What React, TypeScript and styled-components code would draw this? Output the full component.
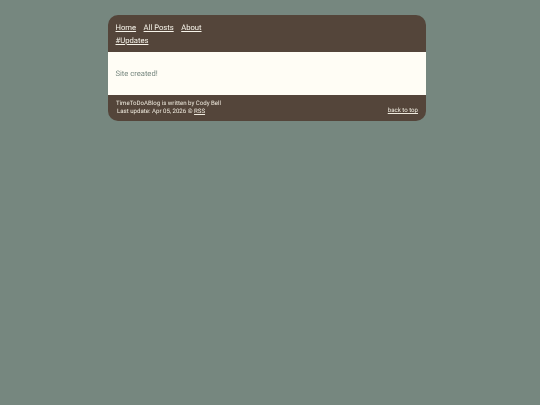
import React from 'react';
import styled, { createGlobalStyle } from 'styled-components';

const GlobalStyle = createGlobalStyle`
	html, body {
		margin: 0;
		padding: 0;
		background: #76877f;
		font-family: Roboto, 'Liberation Sans', sans-serif;
		text-rendering: geometricPrecision;
	}
`;

const Page = styled.div`
	width: 318px;
	margin: 15px 0 0 107.5px;
	border-radius: 10px;
	overflow: hidden;
	background: #54453a;
	will-change: transform;
`;

const Header = styled.header`
	height: 30px;
	padding: 7px 7.5px 0;
`;

const Nav = styled.nav`
	display: flex;
	gap: 7.5px;
	height: 12px;
	margin-bottom: 1px;
`;

const NavLink = styled.a`
	color: #f7f4ea;
	font-size: 7.65px;
	line-height: 12px;
	text-decoration: underline;
	text-decoration-thickness: 0.5px;
`;

const Content = styled.main`
	height: 43px;
	background: #fffdf5;
	padding-left: 7.5px;
	display: flex;
	align-items: center;
	color: #76877f;
	font-size: 7.6px;
`;

const Footer = styled.footer`
	height: 26px;
	padding: 4.5px 8px 0;
	box-sizing: border-box;
	display: flex;
	justify-content: space-between;
	color: #efeade;
	font-size: 6.1px;
	line-height: 8.5px;
`;

const Credits = styled.div`
	display: flex;
	flex-direction: column;
`;

const Updated = styled.span`
	margin-left: 1px;
`;

const FooterLink = styled.a`
	color: #efeade;
	text-decoration: underline;
	text-decoration-thickness: 0.5px;
`;

const TopLink = styled(FooterLink)`
	align-self: flex-end;
	margin-bottom: 5.5px;
`;

const App = () => {
	return (
		<>
			<GlobalStyle />
			<Page>
				<Header>
					<Nav>
						<NavLink href="#">Home</NavLink>
						<NavLink href="#">All Posts</NavLink>
						<NavLink href="#">About</NavLink>
					</Nav>
					<Nav>
						<NavLink href="#">#Updates</NavLink>
					</Nav>
				</Header>
				<Content>Site created!</Content>
				<Footer>
					<Credits>
						<span>TimeToDoABlog is written by Cody Bell</span>
						<Updated>
							Last update: Apr 05, 2026 © <FooterLink href="#">RSS</FooterLink>
						</Updated>
					</Credits>
					<TopLink href="#">back to top</TopLink>
				</Footer>
			</Page>
		</>
	);
};

export default App;
